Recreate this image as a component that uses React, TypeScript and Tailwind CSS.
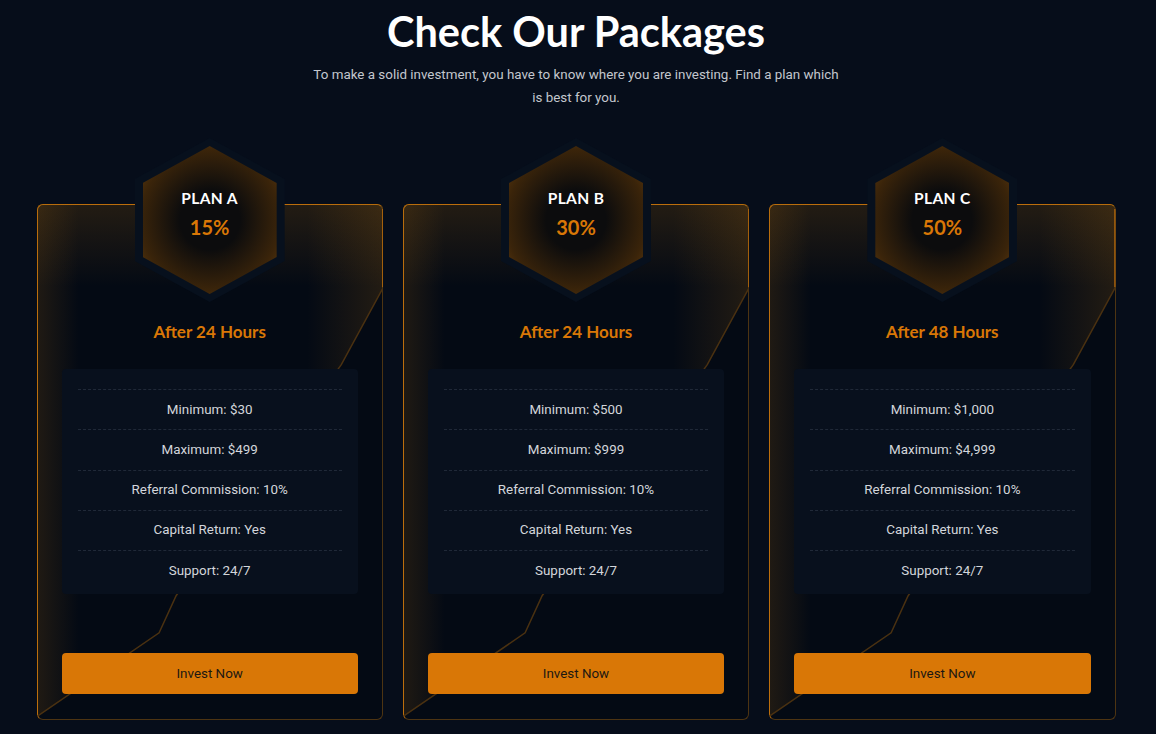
import { useId } from "react";

type Plan = {
  name: string;
  rate: string;
  after: string;
  min: string;
  max: string;
};

const plans: Plan[] = [
  { name: "PLAN A", rate: "15%", after: "After 24 Hours", min: "$30", max: "$499" },
  { name: "PLAN B", rate: "30%", after: "After 24 Hours", min: "$500", max: "$999" },
  { name: "PLAN C", rate: "50%", after: "After 48 Hours", min: "$1,000", max: "$4,999" },
];

const hex = "[clip-path:polygon(50%_0,100%_25%,100%_75%,50%_100%,0_75%,0_25%)]";

const CardDecor = () => {
  const id = useId().replace(/:/g, "");
  const shape = "M6 0 L340 0 Q346 0 346 6 L346 83 L304 160 L139 390 L122 427 L0 510 L0 6 Q0 0 6 0 Z";

  return (
    <svg
      className="pointer-events-none absolute -inset-px h-[calc(100%+2px)] w-[calc(100%+2px)]"
      viewBox="0 0 346 514"
      preserveAspectRatio="none"
    >
      <defs>
        <linearGradient id={`h${id}`} x1="0" y1="0" x2="346" y2="0" gradientUnits="userSpaceOnUse">
          <stop offset="0" stopColor="#a0640f" stopOpacity="0.18" />
          <stop offset="0.12" stopColor="#a0640f" stopOpacity="0" />
          <stop offset="0.78" stopColor="#a0640f" stopOpacity="0" />
          <stop offset="1" stopColor="#a0640f" stopOpacity="0.2" />
        </linearGradient>
        <linearGradient id={`v${id}`} x1="0" y1="0" x2="0" y2="514" gradientUnits="userSpaceOnUse">
          <stop offset="0" stopColor="#a0640f" stopOpacity="0.2" />
          <stop offset="0.16" stopColor="#a0640f" stopOpacity="0" />
        </linearGradient>
      </defs>
      <path d={shape} fill={`url(#h${id})`} />
      <path d={shape} fill={`url(#v${id})`} />
      <path d="M345.5 5 L345.5 83" stroke="#c2700b" strokeWidth="1" fill="none" />
      <path
        d="M346 83 L304 160 L139 390 L122 427 L0.5 510"
        stroke="#4a3111"
        strokeWidth="1.5"
        fill="none"
      />
    </svg>
  );
};

const PlanCard = ({ plan }: { plan: Plan }) => {
  const rows = [
    `Minimum: ${plan.min}`,
    `Maximum: ${plan.max}`,
    "Referral Commission: 10%",
    "Capital Return: Yes",
    "Support: 24/7",
  ];

  return (
    <div className="relative rounded-md border border-[#4d3412] border-l-[#c2700b] border-t-[#c2700b] bg-[#040a14]">
      <CardDecor />

      <div className="relative flex flex-col items-center px-6 pb-[25px]">
        <div className={`-mt-[67px] flex h-[164px] w-[150px] items-center justify-center bg-[#07101d] ${hex}`}>
          <div
            className={`flex h-[148px] w-[134px] flex-col items-center justify-center gap-[6px] pb-3 bg-[radial-gradient(circle,#0c0c0d_30%,#3a240a_70%,#6f430d_100%)] ${hex}`}
          >
            <p className="font-['Lato',sans-serif] text-[15.5px] font-bold leading-5 tracking-wide text-white">
              {plan.name}
            </p>
            <p className="font-['Lato',sans-serif] text-[20px] font-bold leading-[26px] text-[#d97706]">
              {plan.rate}
            </p>
          </div>
        </div>

        <p className="mt-[18px] font-['Lato',sans-serif] text-[17px] font-bold leading-6 text-[#d97706]">
          {plan.after}
        </p>

        <ul className="mt-[25px] w-full rounded-sm bg-[#08101d] px-4 pt-5 pb-1">
          {rows.map((row) => (
            <li
              key={row}
              className="flex h-[40.25px] items-center justify-center border-t border-dashed border-[#202938] text-[13.4px] text-[#d3d6db]"
            >
              {row}
            </li>
          ))}
        </ul>

        <button className="mt-[59px] h-[41px] w-full rounded-[4px] bg-[#d97706] text-[13.4px] text-[#1c1712]">
          Invest Now
        </button>
      </div>
    </div>
  );
};

export default function App() {
  return (
    <div className="min-h-[734px] bg-[#060d1a] pr-1 pt-[7px] font-['Roboto',sans-serif]">
      <div className="flex flex-col items-center">
        <h1 className="font-['Lato',sans-serif] text-[41.5px] font-bold leading-[48px] text-white">
          Check Our Packages
        </h1>
        <p className="mt-[8px] max-w-[528px] text-center text-[13.4px] leading-[23px] text-[#c3c7ce]">
          To make a solid investment, you have to know where you are investing. Find a plan which is best for you.
        </p>

        <div className="mt-[95px] grid w-[1079px] grid-cols-3 gap-5">
          {plans.map((plan) => (
            <PlanCard key={plan.name} plan={plan} />
          ))}
        </div>
      </div>
    </div>
  );
}
